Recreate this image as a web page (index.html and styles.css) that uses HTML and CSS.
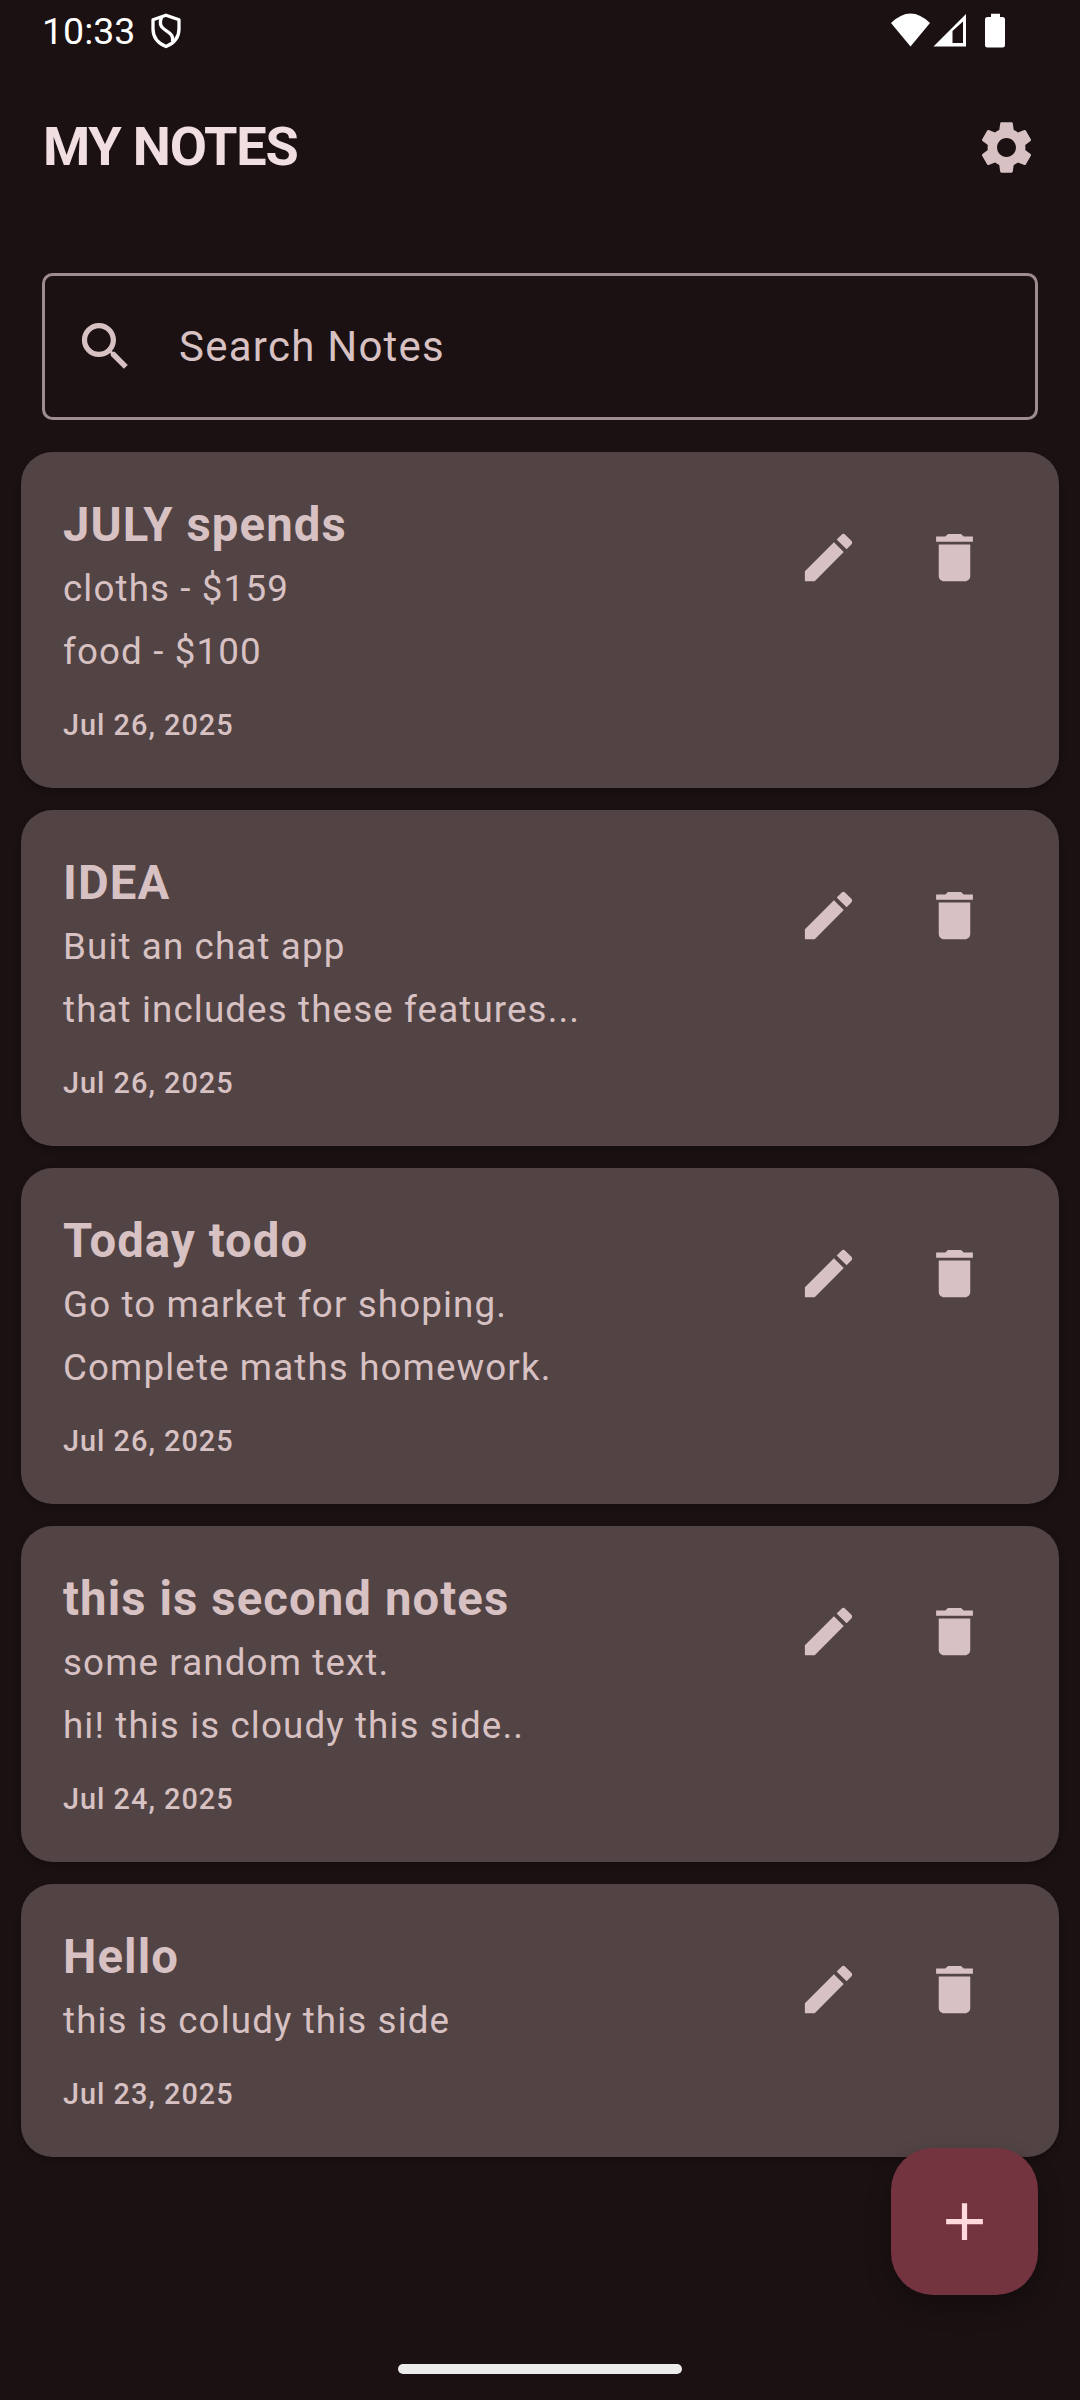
FILE: index.html
```html
<!DOCTYPE html>
<html lang="en">
<head>
<meta charset="utf-8">
<title>My Notes</title>
<link rel="stylesheet" href="styles.css">
</head>
<body>
<svg class="defs" aria-hidden="true">
  <symbol id="edit" viewBox="0 0 24 24"><path d="M3 17.25V21h3.75L17.81 9.94l-3.75-3.75L3 17.25zM20.71 7.04c.39-.39.39-1.02 0-1.41l-2.34-2.34c-.39-.39-1.02-.39-1.41 0l-1.83 1.83 3.75 3.75 1.83-1.83z"/></symbol>
  <symbol id="delete" viewBox="0 0 24 24"><path d="M6 19c0 1.1.9 2 2 2h8c1.1 0 2-.9 2-2V7H6v12zM19 4h-3.5l-1-1h-5l-1 1H5v2h14V4z"/></symbol>
</svg>
<div class="screen">
  <div class="status">
    <span class="time">10:33</span>
    <svg class="shield" viewBox="0 0 30 36" fill="none" stroke="#fff" stroke-width="3.3" stroke-linejoin="round"><path d="M15 2.2 28 6.7V16c0 8.200-5 14.200-13 17.600C7 30.200 2 24.200 2 16V6.700z"/><path d="M10.500 4.500C8.500 9 9 13.500 13.500 16.500S23 22 21.500 28.500"/></svg>
    <svg class="signals" viewBox="0 0 116 36" fill="#fff"><path d="M0 10Q19.500-9 39 10L19.500 33.500z"/><path fill-rule="evenodd" d="M42.500 33.500H75V1zM61.500 30V18L72 8.500V30z"/><path d="M100 .7h9V4h2.500q2.500 0 2.500 2.500V32q0 2.500-2.500 2.500h-15q-2.500 0-2.500-2.500V6.500Q94 4 96.500 4h3.500z"/></svg>
  </div>
  <header class="header">
    <h1 class="heading">MY NOTES</h1>
    <svg class="icon" viewBox="0 0 24 24"><path d="M19.140 12.940c.04-.3.060-.610.060-.940 0-.320-.020-.640-.070-.940l2.030-1.580c.18-.14.23-.41.12-.61l-1.920-3.320c-.12-.22-.37-.29-.59-.22l-2.390.96c-.5-.38-1.030-.7-1.620-.94l-.36-2.540c-.04-.24-.24-.41-.48-.41h-3.840c-.24 0-.43.17-.47.41l-.36 2.540c-.59.24-1.130.57-1.620.94l-2.390-.96c-.22-.08-.47 0-.59.22L2.740 8.870c-.12.21-.08.47.12.61l2.030 1.580c-.05.3-.09.63-.09.94s.02.64.07.94l-2.030 1.580c-.18.14-.23.41-.12.61l1.920 3.320c.12.22.37.29.59.22l2.390-.96c.5.38 1.030.7 1.620.94l.36 2.540c.05.24.24.41.48.41h3.840c.24 0 .44-.17.47-.41l.36-2.540c.59-.24 1.130-.56 1.620-.94l2.390.96c.22.08.47 0 .59-.22l1.920-3.320c.12-.22.07-.47-.12-.61l-2.010-1.580zM12 15.600c-1.980 0-3.600-1.620-3.600-3.600s1.620-3.600 3.600-3.600 3.600 1.620 3.600 3.600-1.620 3.600-3.600 3.600z"/></svg>
  </header>
  <div class="search">
    <svg class="icon" viewBox="0 0 24 24"><path d="M15.500 14h-.79l-.28-.27C15.410 12.590 16 11.110 16 9.500 16 5.910 13.090 3 9.500 3S3 5.910 3 9.500 5.910 16 9.500 16c1.610 0 3.090-.59 4.230-1.570l.27.28v.79l5 4.990L20.490 19l-4.990-5zm-6 0C7.010 14 5 11.990 5 9.500S7.010 5 9.500 5 14 7.010 14 9.500 11.990 14 9.500 14z"/></svg>
    <span class="placeholder">Search Notes</span>
  </div>
  <main class="notes">
    <article class="note">
      <div class="text"><h2 class="title">JULY spends</h2><p class="body">cloths - $159<br>food - $100</p><p class="date">Jul 26, 2025</p></div>
      <div class="actions"><svg class="icon"><use href="#edit"/></svg><svg class="icon"><use href="#delete"/></svg></div>
    </article>
    <article class="note">
      <div class="text"><h2 class="title">IDEA</h2><p class="body">Buit an chat app<br>that includes these features...</p><p class="date">Jul 26, 2025</p></div>
      <div class="actions"><svg class="icon"><use href="#edit"/></svg><svg class="icon"><use href="#delete"/></svg></div>
    </article>
    <article class="note">
      <div class="text"><h2 class="title">Today todo</h2><p class="body">Go to market for shoping.<br>Complete maths homework.</p><p class="date">Jul 26, 2025</p></div>
      <div class="actions"><svg class="icon"><use href="#edit"/></svg><svg class="icon"><use href="#delete"/></svg></div>
    </article>
    <article class="note">
      <div class="text"><h2 class="title">this is second notes</h2><p class="body">some random text.<br>hi! this is cloudy this side..</p><p class="date">Jul 24, 2025</p></div>
      <div class="actions"><svg class="icon"><use href="#edit"/></svg><svg class="icon"><use href="#delete"/></svg></div>
    </article>
    <article class="note">
      <div class="text"><h2 class="title">Hello</h2><p class="body">this is coludy this side</p><p class="date">Jul 23, 2025</p></div>
      <div class="actions"><svg class="icon"><use href="#edit"/></svg><svg class="icon"><use href="#delete"/></svg></div>
    </article>
  </main>
  <div class="fab"><svg class="icon" viewBox="0 0 24 24"><path d="M19 13h-6v6h-2v-6H5v-2h6V5h2v6h6v2z"/></svg></div>
  <div class="home"></div>
</div>
</body>
</html>
```
FILE: styles.css
```css
* { box-sizing: border-box; margin: 0; padding: 0; }
body { background: #1b1112; }
.defs { display: none; }
.screen {
  position: relative;
  display: flex;
  flex-direction: column;
  width: 1080px;
  height: 2400px;
  overflow: hidden;
  background: #1b1112;
  color: #d7c1c3;
  font-family: Roboto, sans-serif;
}
.icon { display: block; flex: none; width: 63px; height: 63px; fill: #d7c1c3; }
.status { display: flex; align-items: flex-start; height: 63px; padding: 9px 73px 0 42px; color: #fff; }
.time { width: 109px; font-size: 37.5px; line-height: 44px; }
.shield { width: 30px; height: 36px; margin-top: 4px; }
.signals { width: 116px; height: 36px; margin: 4px 0 0 auto; }
.header { display: flex; align-items: center; justify-content: space-between; height: 168px; padding: 0 42px; }
.heading { margin-bottom: 2px; padding-left: 1px; color: #f0dee0; font-size: 54px; font-weight: 700; line-height: 63px; letter-spacing: -1.2px; }
.search {
  display: flex;
  align-items: center;
  height: 147px;
  margin: 42px 42px 0;
  padding-left: 29px;
  border: 3px solid #9f8c8e;
  border-radius: 10.5px;
}
.placeholder { margin-left: 42px; font-size: 42px; line-height: 63px; letter-spacing: 1.25px; }
.notes { display: flex; flex-direction: column; gap: 22px; margin-top: 32px; padding: 0 21px; }
.note {
  display: flex;
  justify-content: space-between;
  padding: 42px;
  border-radius: 31.5px;
  background: #524344;
  box-shadow: 0 3px 7px rgba(0, 0, 0, .28);
}
.title { font-size: 47.25px; font-weight: 700; line-height: 63px; letter-spacing: 1.1px; }
.body { font-size: 36.75px; line-height: 63px; letter-spacing: 1.12px; }
.date { margin-top: 21px; font-size: 28.875px; font-weight: 500; line-height: 42px; letter-spacing: 1px; }
.actions { display: flex; gap: 63px; padding: 32px 31px 0 0; }
.fab {
  position: absolute;
  right: 42px;
  bottom: 105px;
  display: grid;
  place-items: center;
  width: 147px;
  height: 147px;
  border-radius: 42px;
  background: #73333f;
  box-shadow: 0 12px 24px rgba(0, 0, 0, .3);
}
.fab .icon { fill: #ffd9dd; }
.home { width: 284px; height: 10px; margin: auto auto 26px; border-radius: 5px; background: #ececec; }
```
